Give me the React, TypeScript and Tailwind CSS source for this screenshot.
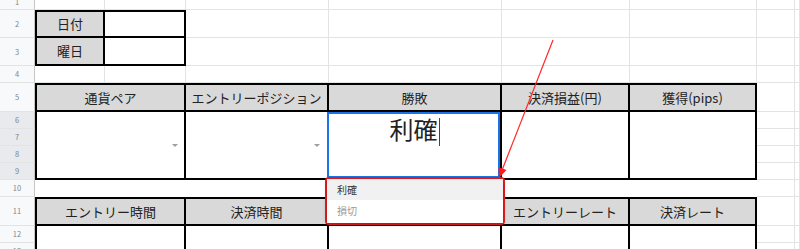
import type { ReactNode } from 'react'

const rowStart = [
    '',
    'row-start-1',
    'row-start-2',
    'row-start-3',
    'row-start-4',
    'row-start-5',
    'row-start-6',
    'row-start-7',
    'row-start-8',
    'row-start-9',
    'row-start-10',
    'row-start-11',
    'row-start-12',
    'row-start-13',
]
const colStart = [
    '',
    'col-start-1',
    'col-start-2',
    'col-start-3',
    'col-start-4',
    'col-start-5',
    'col-start-6',
    'col-start-7',
    'col-start-8',
    'col-start-9',
]

const gridLine = 'border-r border-b border-[#e2e3e3]'
const head = 'bg-[#d9d9d9] border-black flex items-center justify-center text-[13px] text-[#222]'

// empty cells that only show the sheet's gridlines: [row, col]
const blanks: [number, number][] = []
for (let c = 2; c <= 9; c++) blanks.push([1, c], [4, c])
for (let c = 4; c <= 9; c++) blanks.push([2, c], [3, c])
for (let r = 5; r <= 13; r++) blanks.push([r, 8], [r, 9])

function RowHeader({ n }: { n: number }) {
    let selected = n >= 6 && n <= 9
    return (
        <div
            className={`${rowStart[n]} col-start-1 overflow-hidden border-r border-b border-r-[#c4c7c5] border-b-[#e2e3e3] ${
                selected ? 'bg-[#e8eaed]' : 'bg-[#f8f9fa]'
            }`}
        >
            <div
                className={`flex h-[17px] items-center justify-center text-[7.5px] text-[#80868b] ${
                    n === 1 ? '-mt-[7px]' : 'h-full'
                }`}
            >
                {n}
            </div>
        </div>
    )
}

function DropArrow() {
    return <span className="h-0 w-0 border-x-[3px] border-t-[3px] border-x-transparent border-t-[#9aa0a6]" />
}

function Head({ className, children }: { className: string; children?: ReactNode }) {
    return <div className={`${head} ${className}`}>{children}</div>
}

function EditingCell() {
    return (
        <div className="relative col-start-5 row-start-6 row-span-4 border-r-2 border-b-2 border-black bg-white">
            <div className="absolute -left-[2px] top-0 right-0 bottom-0 border-2 border-[#1a73e8]" />
            <div className="flex items-start justify-center pt-[5px]">
                <span className="text-[24px] leading-none text-[#222]">利確</span>
                <span className="ml-px mt-px h-[28px] w-px bg-[#444]" />
            </div>
            <div className="absolute -left-[4px] top-[calc(100%-1px)] z-10 h-[48px] w-[180px] rounded-[4px] border-2 border-[#ee1c1c]">
                <div className="h-full w-full bg-white text-[10px] shadow-[0_1px_4px_rgba(0,0,0,0.3)]">
                    <div className="flex h-[21px] items-center bg-[#f1f1f1] pl-[10px] text-[#333]">利確</div>
                    <div className="flex h-[21px] items-center pl-[10px] text-[#9a9a9a]">損切</div>
                </div>
            </div>
        </div>
    )
}

export default function App() {
    return (
        <div
            className="relative h-[249px] w-[800px] overflow-hidden bg-white"
            style={{ fontFamily: '"Noto Sans CJK JP", "Liberation Sans", sans-serif' }}
        >
            <div className="grid grid-cols-[35px_70px_81px_143px_173px_128px_127px_38px_1fr] grid-rows-[10px_28px_28px_17px_29px_17px_17px_17px_17px_17px_29px_17px_17px]">
                {Array.from({ length: 13 }, (_, i) => (
                    <RowHeader key={i} n={i + 1} />
                ))}
                {blanks.map(([r, c]) => (
                    <div key={`${r}-${c}`} className={`${rowStart[r]} ${colStart[c]} ${gridLine}`} />
                ))}

                {/* 日付 / 曜日 */}
                <Head className="col-start-2 row-start-2 border-2">日付</Head>
                <div className="col-start-3 row-start-2 border-t-2 border-r-2 border-b-2 border-black bg-white" />
                <Head className="col-start-2 row-start-3 border-r-2 border-b-2 border-l-2">曜日</Head>
                <div className="col-start-3 row-start-3 border-r-2 border-b-2 border-black bg-white" />

                {/* trade table, first block */}
                <Head className="col-start-2 col-span-2 row-start-5 border-2">通貨ペア</Head>
                <Head className="col-start-4 row-start-5 border-t-2 border-r-2 border-b-2">エントリーポジション</Head>
                <Head className="col-start-5 row-start-5 border-t-2 border-r-2 border-b-2">勝敗</Head>
                <Head className="col-start-6 row-start-5 border-t-2 border-r-2 border-b-2">決済損益(円)</Head>
                <Head className="col-start-7 row-start-5 border-t-2 border-r-2 border-b-2">獲得(pips)</Head>

                <div className="col-start-2 col-span-2 row-start-6 row-span-4 flex items-center justify-end border-r-2 border-b-2 border-l-2 border-black bg-white pr-[6px] pt-px">
                    <DropArrow />
                </div>
                <div className="col-start-4 row-start-6 row-span-4 flex items-center justify-end border-r-2 border-b-2 border-black bg-white pr-[7px] pt-px">
                    <DropArrow />
                </div>
                <EditingCell />
                <div className="col-start-6 row-start-6 row-span-4 border-r-2 border-b-2 border-black bg-white" />
                <div className="col-start-7 row-start-6 row-span-4 border-r-2 border-b-2 border-black bg-white" />

                <div className="col-start-2 col-span-6 row-start-10 bg-white" />

                {/* trade table, second block */}
                <Head className="col-start-2 col-span-2 row-start-11 border-2">エントリー時間</Head>
                <Head className="col-start-4 row-start-11 border-t-2 border-r-2 border-b-2">決済時間</Head>
                <Head className="col-start-5 row-start-11 border-t-2 border-r-2 border-b-2">決済価格</Head>
                <Head className="col-start-6 row-start-11 border-t-2 border-r-2 border-b-2">エントリーレート</Head>
                <Head className="col-start-7 row-start-11 border-t-2 border-r-2 border-b-2">決済レート</Head>

                <div className="col-start-2 col-span-2 row-start-12 row-span-2 border-r-2 border-l-2 border-black bg-white" />
                <div className="col-start-4 row-start-12 row-span-2 border-r-2 border-black bg-white" />
                <div className="col-start-5 row-start-12 row-span-2 border-r-2 border-black bg-white" />
                <div className="col-start-6 row-start-12 row-span-2 border-r-2 border-black bg-white" />
                <div className="col-start-7 row-start-12 row-span-2 border-r-2 border-black bg-white" />
            </div>

            {/* red annotation arrow */}
            <svg className="pointer-events-none absolute inset-0 z-20" width="800" height="249" viewBox="0 0 800 249">
                <line x1="553" y1="40" x2="502.5" y2="169" stroke="#ff2a2a" strokeWidth="1.2" />
                <polygon points="499,178 506.5,170 498.5,167" fill="#ff1a1a" />
            </svg>
        </div>
    )
}
